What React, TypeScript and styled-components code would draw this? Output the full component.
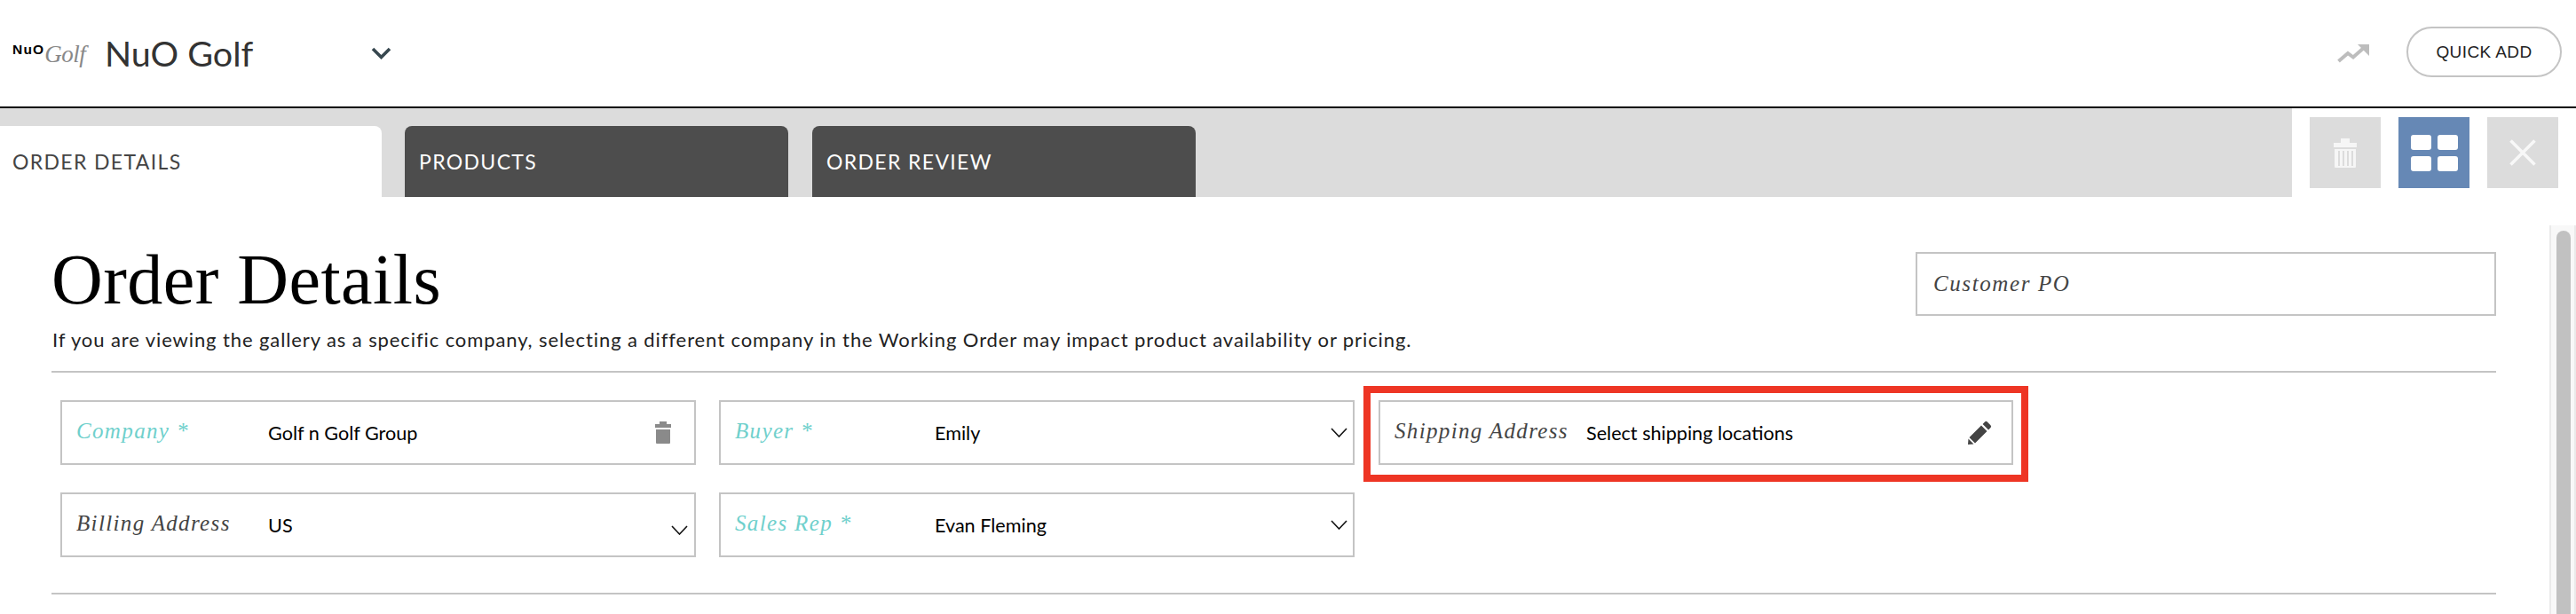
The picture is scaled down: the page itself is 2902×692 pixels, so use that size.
import React from "react";
import styled, { createGlobalStyle } from "styled-components";

const Global = createGlobalStyle`
  html, body { margin: 0; padding: 0; background: #fff; overflow: hidden; }
  * { box-sizing: border-box; }
`;

const Page = styled.div`
  width: 2902px;
  height: 692px;
  overflow: hidden;
  display: flex;
  flex-direction: column;
  background: #fff;
`;

const Header = styled.header`
  height: 122px;
  flex: none;
  display: flex;
  align-items: center;
  border-bottom: 2px solid #000;
  padding: 0 16px 0 14px;
`;

const Logo = styled.div`
  width: 88px;
  height: 40px;
  flex: none;
  display: flex;
  align-items: center;
`;

const LogoMark = styled.span`
  font-family: "Liberation Sans", sans-serif;
  font-weight: 700;
  font-size: 15.5px;
  letter-spacing: 1.2px;
  color: #000;
  line-height: 1;
  margin-top: -8px;
`;

const LogoScript = styled.span`
  font-family: "Liberation Serif", serif;
  font-style: italic;
  font-size: 27px;
  color: #888;
  line-height: 1;
  letter-spacing: -0.5px;
  margin-left: 0;
  margin-top: 2px;
  font-weight: 400;
`;

const BrandName = styled.div`
  font-family: Lato, sans-serif;
  font-size: 39.5px;
  color: #333;
  margin-left: 16px;
  line-height: 1;
  width: 300px;
`;

const Chevron = styled.svg`
  flex: none;
  display: block;
`;

const HeaderRight = styled.div`
  margin-left: auto;
  display: flex;
  align-items: center;
  gap: 42px;
`;

const QuickAdd = styled.button`
  width: 175px;
  height: 57px;
  border: 2px solid #c4c4c4;
  border-radius: 29px;
  background: #fff;
  font-family: "Liberation Sans", sans-serif;
  font-size: 19px;
  color: #222;
  letter-spacing: 0.4px;
  margin-top: -3px;
  padding: 0;
`;

const TabRow = styled.div`
  height: 100px;
  flex: none;
  display: flex;
`;

const TabTrack = styled.nav`
  width: 2582px;
  background: #dcdcdc;
  padding-top: 20px;
  display: flex;
  gap: 26px;
`;

const Tab = styled.div<{ $active?: boolean }>`
  width: ${(p) => (p.$active ? "430px" : "432px")};
  height: 80px;
  background: ${(p) => (p.$active ? "#fff" : "#4d4d4d")};
  color: ${(p) => (p.$active ? "#444" : "#fff")};
  border-radius: ${(p) => (p.$active ? "0 8px 0 0" : "8px 8px 0 0")};
  font-family: Lato, sans-serif;
  font-size: 23px;
  letter-spacing: 1.35px;
  padding: 26px 0 0 ${(p) => (p.$active ? "14px" : "16px")};
  line-height: 28px;
  & + & + & {
    margin-left: 1px;
  }
`;

const ActionGroup = styled.div`
  display: flex;
  gap: 20px;
  padding: 10px 0 0 20px;
`;

const ActionButton = styled.div<{ $blue?: boolean }>`
  width: 80px;
  height: 80px;
  background: ${(p) => (p.$blue ? "#6688b5" : "#dcdcdc")};
  display: flex;
  align-items: center;
  justify-content: center;
`;

const Body = styled.div`
  flex: 1;
  display: flex;
  justify-content: space-between;
  min-height: 0;
`;

const Main = styled.main`
  width: 2754px;
  margin-left: 58px;
`;

const TopRow = styled.div`
  display: flex;
  justify-content: space-between;
  align-items: flex-start;
  padding-top: 62px;
  height: 196px;
`;

const TitleBlock = styled.div`
  margin-top: -11px;
`;

const Title = styled.h1`
  font-family: "Liberation Serif", serif;
  font-weight: 400;
  font-size: 80px;
  letter-spacing: 0.45px;
  line-height: 84px;
  margin: 0;
  color: #000;
`;

const Description = styled.p`
  font-family: Lato, sans-serif;
  font-size: 22px;
  letter-spacing: 0.9px;
  line-height: 26px;
  color: #222;
  margin: 13px 0 0 1px;
  white-space: nowrap;
`;

const PoBox = styled.div`
  width: 654px;
  height: 72px;
  border: 2px solid #c4c4c4;
  display: flex;
  align-items: center;
  padding-left: 18px;
  font-family: "Liberation Serif", serif;
  font-style: italic;
  font-size: 25px;
  letter-spacing: 1.6px;
  color: #444;
`;

const Rule = styled.hr`
  border: none;
  height: 2px;
  background: #c4c4c4;
  margin: 0;
`;

const FieldGrid = styled.div`
  display: grid;
  grid-template-columns: repeat(3, 716px);
  column-gap: 26px;
  row-gap: 31px;
  padding: 31px 0 40px 10px;
`;

const Field = styled.div<{ $marked?: boolean; $valueAt: number }>`
  height: 73px;
  border: 2px solid #c4c4c4;
  display: grid;
  grid-template-columns: ${(p) => p.$valueAt}px 1fr auto;
  align-items: center;
  padding-left: 16px;
  position: relative;
  ${(p) => (p.$marked ? "margin-left: 1px;" : "")}
  ${(p) =>
    p.$marked
      ? `&::after {
      content: "";
      position: absolute;
      left: -19px;
      right: -19px;
      top: -18px;
      bottom: -21px;
      border-style: solid;
      border-color: #ee3524;
      border-width: 8px;
      pointer-events: none;
    }`
      : ""}
`;

const Label = styled.span<{ $required?: boolean }>`
  font-family: "Liberation Serif", serif;
  font-style: italic;
  font-size: 25px;
  letter-spacing: 1.35px;
  color: ${(p) => (p.$required ? "#6fd0cc" : "#444")};
  margin-top: -4px;
  white-space: nowrap;
`;

const Value = styled.span`
  font-family: Lato, sans-serif;
  font-size: 21.6px;
  color: #000;
  white-space: nowrap;
`;

const FieldIcon = styled.span<{ $right: number; $shift?: number }>`
  display: flex;
  margin-right: ${(p) => p.$right}px;
  margin-top: ${(p) => p.$shift ?? 0}px;
`;

const Scrollbar = styled.div`
  width: 30px;
  margin-top: 32px;
  background: #f8f8f8;
  border-left: 2px solid #eaeaea;
  border-right: 2px solid #eaeaea;
  padding: 6px 0 0 6px;
`;

const Thumb = styled.div`
  width: 16px;
  height: 100%;
  background: #c1c1c1;
  border-radius: 8px 8px 0 0;
`;

const DownChevron = () => (
  <Chevron width={19} height={11} viewBox="0 0 19 11" fill="none">
    <path d="M1 1l8.5 9L18 1" stroke="#111" strokeWidth="1.6" />
  </Chevron>
);

const GreyTrash = () => (
  <svg width="20" height="25" viewBox="0 0 20 25">
    <path fill="#8a8a8a" d="M6 0h8v3h5v4H1V3h5zM2 9h16v15a1 1 0 0 1-1 1H3a1 1 0 0 1-1-1z" />
  </svg>
);

export default function App() {
  return (
    <Page>
      <Global />
      <Header>
        <Logo>
          <LogoMark>NuO</LogoMark>
          <LogoScript>Golf</LogoScript>
        </Logo>
        <BrandName>NuO Golf</BrandName>
        <Chevron width="23" height="14" viewBox="0 0 23 14" fill="none">
          <path d="M2 2l9.5 9.5L21 2" stroke="#37474f" strokeWidth="3.6" />
        </Chevron>
        <HeaderRight>
          <svg width="36" height="22" viewBox="0 0 36 22" fill="none">
            <path d="M1.500 20L12 11l6 4.500L31 4" stroke="#bdbdbd" strokeWidth="4" />
            <path d="M23 1h13v13z" fill="#bdbdbd" />
          </svg>
          <QuickAdd>QUICK ADD</QuickAdd>
        </HeaderRight>
      </Header>
      <TabRow>
        <TabTrack>
          <Tab $active>ORDER DETAILS</Tab>
          <Tab>PRODUCTS</Tab>
          <Tab>ORDER REVIEW</Tab>
        </TabTrack>
        <ActionGroup>
          <ActionButton>
            <svg width="26" height="33" viewBox="0 0 26 33">
              <path
                fill="#f6f6f6"
                d="M8 0h10v5h8v5H0V5h8zM1 12h24v20a1 1 0 0 1-1 1H2a1 1 0 0 1-1-1zM5 14v17h2V14zm5 0v17h2V14zm5 0v17h2V14zm5 0v17h2V14z"
                fillRule="evenodd"
              />
            </svg>
          </ActionButton>
          <ActionButton $blue>
            <svg width="53" height="41" viewBox="0 0 53 41">
              <rect x="0" y="0" width="23" height="17" rx="3" fill="#fff" />
              <rect x="30" y="0" width="23" height="17" rx="3" fill="#fff" />
              <rect x="0" y="24" width="23" height="17" rx="3" fill="#fff" />
              <rect x="30" y="24" width="23" height="17" rx="3" fill="#fff" />
            </svg>
          </ActionButton>
          <ActionButton>
            <svg width="30" height="30" viewBox="0 0 30 30" fill="none">
              <path d="M1.500 1.500l27 27M28.500 1.500l-27 27" stroke="#f8f8f8" strokeWidth="3.6" />
            </svg>
          </ActionButton>
        </ActionGroup>
      </TabRow>
      <Body>
        <Main>
          <TopRow>
            <TitleBlock>
              <Title>Order Details</Title>
              <Description>
                If you are viewing the gallery as a specific company, selecting a different company in the Working Order may impact product availability or pricing.
              </Description>
            </TitleBlock>
            <PoBox>Customer PO</PoBox>
          </TopRow>
          <Rule />
          <FieldGrid>
            <Field $valueAt={216}>
              <Label $required>Company *</Label>
              <Value>Golf n Golf Group</Value>
              <FieldIcon $right={25}>
                <GreyTrash />
              </FieldIcon>
            </Field>
            <Field $valueAt={225}>
              <Label $required>Buyer *</Label>
              <Value>Emily</Value>
              <FieldIcon $right={6}>
                <DownChevron />
              </FieldIcon>
            </Field>
            <Field $marked $valueAt={216}>
              <Label>Shipping Address</Label>
              <Value>Select shipping locations</Value>
              <FieldIcon $right={22}>
                <svg width="27" height="27" viewBox="0 0 27 27">
                  <path fill="#444" d="M19 1.500a2 2 0 0 1 2.800 0l3.700 3.700a2 2 0 0 1 0 2.800l-2.400 2.400-6.500-6.500zM15 5.500l6.500 6.500L8 25.500 1.500 19zM0.500 20.500l6 6L0 27z" />
                </svg>
              </FieldIcon>
            </Field>
            <Field $valueAt={216}>
              <Label>Billing Address</Label>
              <Value>US</Value>
              <FieldIcon $right={7} $shift={11}>
                <DownChevron />
              </FieldIcon>
            </Field>
            <Field $valueAt={225}>
              <Label $required>Sales Rep *</Label>
              <Value>Evan Fleming</Value>
              <FieldIcon $right={6}>
                <DownChevron />
              </FieldIcon>
            </Field>
          </FieldGrid>
          <Rule />
        </Main>
        <Scrollbar>
          <Thumb />
        </Scrollbar>
      </Body>
    </Page>
  );
}
